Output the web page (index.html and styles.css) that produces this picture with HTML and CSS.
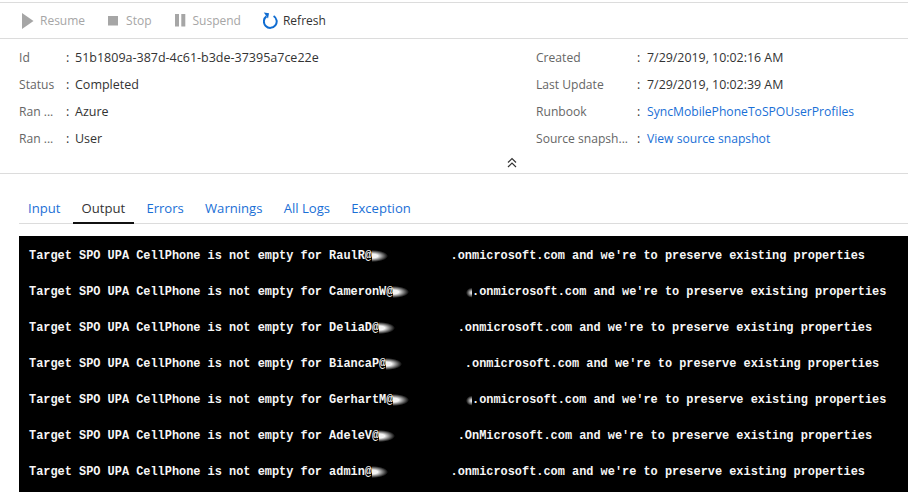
FILE: index.html
```html
<!DOCTYPE html>
<html lang="en">
<head>
<meta charset="utf-8">
<title>Job output</title>
<link rel="stylesheet" href="styles.css">
</head>
<body>
<div class="toolbar">
  <div class="tool disabled"><svg class="ico" width="12" height="16" viewBox="0 0 12 16"><path d="M0 0 L11.5 8 L0 16 Z" fill="#a6a6a6"/></svg>Resume</div>
  <div class="tool disabled"><svg class="ico" width="12" height="10" viewBox="0 0 12 10"><rect width="10" height="9.5" fill="#a6a6a6"/></svg>Stop</div>
  <div class="tool disabled"><svg class="ico" width="12" height="13" viewBox="0 0 12 13"><rect width="4" height="12.5" fill="#a6a6a6"/><rect x="6.3" width="4" height="12.5" fill="#a6a6a6"/></svg>Suspend</div>
  <div class="tool tool-refresh"><svg class="ico" width="15" height="17" viewBox="0 0 15 17"><path d="M3.4 4.4 A6.4 6.4 0 1 0 10.6 4" fill="none" stroke="#0f6cd1" stroke-width="2"/><path d="M0.8 0.4 L6 1.2 L5 6.4 Z" fill="#0f6cd1"/></svg>Refresh</div>
</div>
<div class="details">
  <dl class="col col-left">
    <div class="row"><dt>Id</dt><dd>51b1809a-387d-4c61-b3de-37395a7ce22e</dd></div>
    <div class="row"><dt>Status</dt><dd>Completed</dd></div>
    <div class="row"><dt>Ran ...</dt><dd>Azure</dd></div>
    <div class="row"><dt>Ran ...</dt><dd>User</dd></div>
  </dl>
  <dl class="col col-right">
    <div class="row"><dt>Created</dt><dd>7/29/2019, 10:02:16 AM</dd></div>
    <div class="row"><dt>Last Update</dt><dd>7/29/2019, 10:02:39 AM</dd></div>
    <div class="row"><dt>Runbook</dt><dd><a href="#">SyncMobilePhoneToSPOUserProfiles</a></dd></div>
    <div class="row"><dt>Source snapsh...</dt><dd><a href="#">View source snapshot</a></dd></div>
  </dl>
</div>
<div class="collapse"><svg width="10" height="11" viewBox="0 0 10 11"><path d="M1 5.5 L5 1.5 L9 5.5 M1 10 L5 6 L9 10" fill="none" stroke="#333" stroke-width="1.2"/></svg></div>
<div class="tabs">
  <a class="tab" href="#">Input</a>
  <a class="tab active" href="#">Output</a>
  <a class="tab" href="#">Errors</a>
  <a class="tab" href="#">Warnings</a>
  <a class="tab" href="#">All Logs</a>
  <a class="tab" href="#">Exception</a>
</div>
<div class="console">
  <p>Target SPO UPA CellPhone is not empty for RaulR@<span class="mask"></span>.onmicrosoft.com and we're to preserve existing properties</p>
  <p>Target SPO UPA CellPhone is not empty for CameronW@<span class="mask tail"></span>.onmicrosoft.com and we're to preserve existing properties</p>
  <p>Target SPO UPA CellPhone is not empty for DeliaD@<span class="mask"></span>.onmicrosoft.com and we're to preserve existing properties</p>
  <p>Target SPO UPA CellPhone is not empty for BiancaP@<span class="mask"></span>.onmicrosoft.com and we're to preserve existing properties</p>
  <p>Target SPO UPA CellPhone is not empty for GerhartM@<span class="mask tail"></span>.onmicrosoft.com and we're to preserve existing properties</p>
  <p>Target SPO UPA CellPhone is not empty for AdeleV@<span class="mask"></span>.OnMicrosoft.com and we're to preserve existing properties</p>
  <p>Target SPO UPA CellPhone is not empty for admin@<span class="mask"></span>.onmicrosoft.com and we're to preserve existing properties</p>
</div>
</body>
</html>
```
FILE: styles.css
```css
* { box-sizing: border-box; }
html, body { margin: 0; padding: 0; }
body {
  width: 908px;
  height: 492px;
  overflow: hidden;
  background: #fff;
  font-family: "Open Sans", "Noto Sans", sans-serif;
  font-size: 12.5px;
  color: #333;
}
.toolbar {
  display: flex;
  align-items: center;
  height: 37px;
  margin-top: 2px;
  padding-left: 22px;
  gap: 23px;
  font-size: 12px;
  border-top: 1px solid #dcdcdc;
  border-bottom: 1px solid #dcdcdc;
}
.tool { display: flex; align-items: center; gap: 6px; color: #333; }
.tool.disabled { color: #a6a6a6; }
.tool-refresh { margin-left: -1px; gap: 5px; }
.ico { flex: none; }
.details {
  display: flex;
  padding: 5px 0 0 19px;
}
.col { margin: 0; }
.col-left { width: 517px; }
.row { display: flex; height: 27px; align-items: center; }
dt { color: #666; font-size: 12.1px; }
dd { margin: 0; }
dd::before { content: ":"; position: absolute; margin-left: -9px; color: #333; }
.col-right dd::before { margin-left: -10px; }
.col-left dt { width: 56px; }
.col-right dt { width: 111px; }
.col-right dd { font-size: 12.4px; }
a { color: #1a6fd6; text-decoration: none; }
.col-right dd a { font-size: 12.15px; }
.collapse {
  display: flex;
  justify-content: center;
  align-items: center;
  height: 22px;
  padding-left: 115px;
  border-bottom: 1px solid #dcdcdc;
}
.tabs {
  display: flex;
  margin: 21px 0 0 19px;
  height: 29px;
  border-bottom: 1px solid #dcdcdc;
}
.tab { padding: 0 9px 0; height: 28px; line-height: 26px; font-size: 13.1px; margin-right: 3.2px; }
.tab.active { color: #333; border-bottom: 2px solid #111; margin-bottom: -1px; height: 29px; }
.console {
  margin: 12px 0 0 19px;
  height: 256px;
  background: #000;
  padding: 2px 0 0 10px;
  font-family: "Liberation Mono", monospace;
  font-size: 11.92px;
  font-weight: bold;
  color: #f6f6f6;
}
.console p { margin: 0; height: 36px; line-height: 36px; white-space: pre; }
.mask {
  display: inline-block;
  width: 11ch;
  height: 14px;
  vertical-align: middle;
  background: radial-gradient(ellipse 16px 6px at 0 50%, #f4f4f4 35%, rgba(244,244,244,0) 100%);
}
.mask.tail {
  background:
    radial-gradient(ellipse 16px 6px at 0 50%, #f4f4f4 35%, rgba(244,244,244,0) 100%),
    radial-gradient(ellipse 6px 5px at 100% 55%, #d8d8d8 20%, rgba(200,200,200,0) 100%);
}
```
